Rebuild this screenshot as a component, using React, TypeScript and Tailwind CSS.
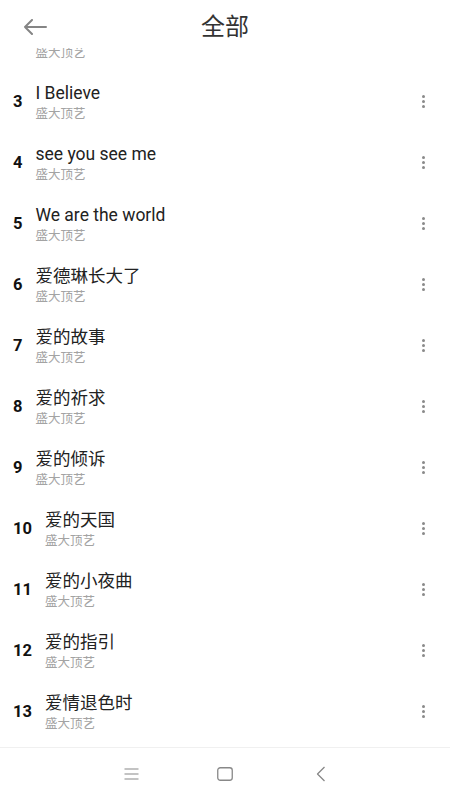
import React from "react";

const songs: [number, string][] = [
  [2, "爱你一万年"],
  [3, "I Believe"],
  [4, "see you see me"],
  [5, "We are the world"],
  [6, "爱德琳长大了"],
  [7, "爱的故事"],
  [8, "爱的祈求"],
  [9, "爱的倾诉"],
  [10, "爱的天国"],
  [11, "爱的小夜曲"],
  [12, "爱的指引"],
  [13, "爱情退色时"],
  [14, "爱我"],
];

const font = { fontFamily: 'Roboto, "Noto Sans CJK SC", sans-serif' };

function Dots() {
  return (
    <div className="flex flex-col items-center gap-[2px]">
      <span className="block h-[3px] w-[3px] rounded-full bg-[#8a8a8a]" />
      <span className="block h-[3px] w-[3px] rounded-full bg-[#8a8a8a]" />
      <span className="block h-[3px] w-[3px] rounded-full bg-[#8a8a8a]" />
    </div>
  );
}

export default function App() {
  return (
    <div
      className="flex h-[800px] w-[450px] flex-col overflow-hidden bg-white"
      style={font}
    >
      <header className="relative z-10 flex h-[48px] shrink-0 items-center bg-white pt-[6px]">
        <div className="pl-[23px]">
          <svg width="24" height="16" viewBox="0 0 24 16" fill="none">
            <path
              d="M23 8H2M9 1L2 8l7 7"
              stroke="#858585"
              strokeWidth="2"
              strokeLinecap="round"
              strokeLinejoin="round"
            />
          </svg>
        </div>
        <div className="pointer-events-none absolute inset-x-0 top-[6px] bottom-0 flex items-center justify-center">
          <span className="text-[24px] text-[#333]">全部</span>
        </div>
      </header>

      <main className="min-h-0 flex-1 overflow-hidden">
        <div className="-mt-[37px]">
          {songs.map(([n, title]) => (
            <div key={n} className="flex h-[61px] items-center">
              <div className="pl-[13px] pr-[13px] text-[16.5px] font-bold text-[#111]">
                {n}
              </div>
              <div className="flex min-w-0 flex-1 flex-col">
                <div className="text-[17.5px] leading-[21px] text-[#222]">
                  {title}
                </div>
                <div className="mt-[1px] text-[12.5px] leading-[18px] text-[#a3a3a3]">
                  盛大顶艺
                </div>
              </div>
              <div className="pr-[25px] pb-[2px]">
                <Dots />
              </div>
            </div>
          ))}
        </div>
      </main>

      <nav className="flex h-[53px] shrink-0 items-center border-t border-[#f0f0f0] bg-white pl-[124px]">
        <svg width="15" height="12" viewBox="0 0 15 12" fill="none">
          <path d="M0.5 1h14M0.5 6h14M0.5 11h14" stroke="#888" strokeWidth="1.2" />
        </svg>
        <svg className="ml-[78px]" width="16" height="14" viewBox="0 0 16 14" fill="none">
          <rect x="0.75" y="0.75" width="14.5" height="12.5" rx="2.5" stroke="#888" strokeWidth="1.3" />
        </svg>
        <svg className="ml-[83px]" width="10" height="16" viewBox="0 0 10 16" fill="none">
          <path d="M8.5 1L1.5 8l7 7" stroke="#888" strokeWidth="1.3" strokeLinejoin="round" />
        </svg>
      </nav>
    </div>
  );
}
